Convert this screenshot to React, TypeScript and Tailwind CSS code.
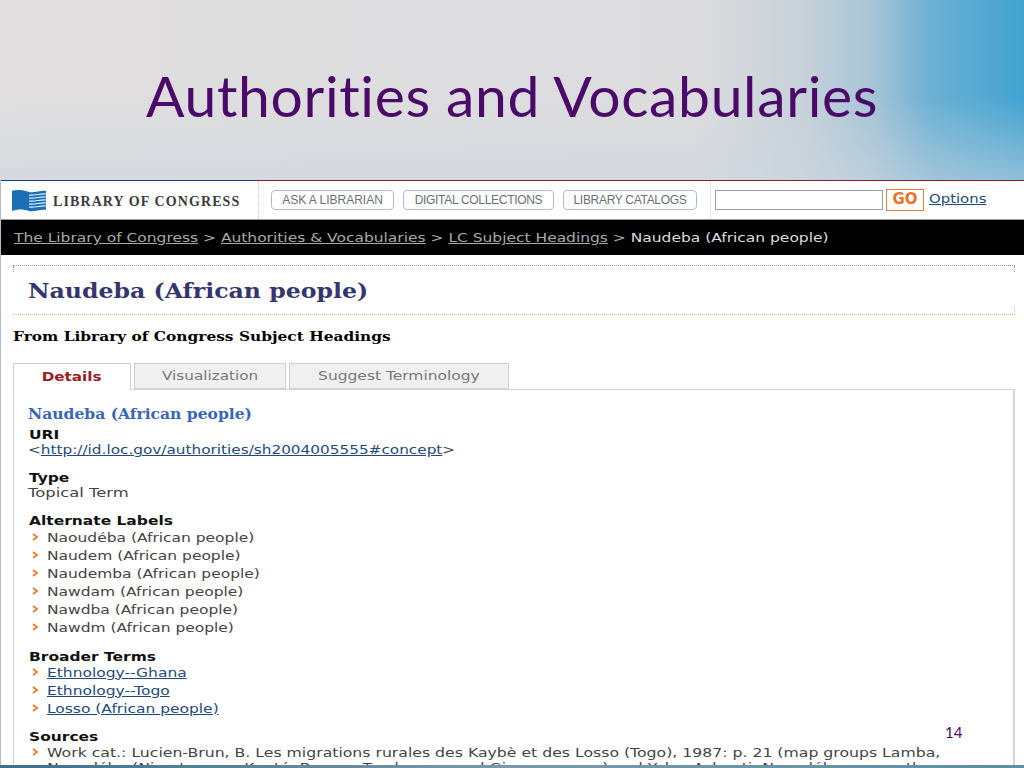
import React from "react";

// the captured page in the slide is stretched sideways
const wide = "inline-block origin-left scale-x-[1.19] whitespace-nowrap";

const Arrow = () => (
  <svg width="8" height="8" viewBox="0 0 8 8" className="shrink-0">
    <path d="M2 1 L6 4 L2 7" fill="none" stroke="#e8803a" strokeWidth="2" />
  </svg>
);

const Item = ({ text, link }: { text: string; link?: boolean }) => (
  <li className="flex items-center h-[18px]">
    <span className="ml-[3px] mr-[8px] flex">
      <Arrow />
    </span>
    <span className={link ? `${wide} text-[#1f4a7a] underline` : `${wide} text-[#444]`}>{text}</span>
  </li>
);

const Label = ({ children }: { children: React.ReactNode }) => (
  <div className="font-bold text-[#111] text-[13px] h-[15px] leading-[15px] pl-px">
    <span className={wide}>{children}</span>
  </div>
);

const NavButton = ({ label, w, tight }: { label: string; w: string; tight?: boolean }) => (
  <div className={`${w} ${tight ? "tracking-[-0.3px]" : ""} h-[20px] flex items-center justify-center border border-[#b4bcc8] rounded-[4px] text-[#6a7078] text-[12px] font-['Liberation_Sans',sans-serif] bg-white`}>
    {label}
  </div>
);

export default function App() {
  return (
    <div className="relative w-[1024px] h-[768px] overflow-hidden bg-white font-['DejaVu_Sans',sans-serif]">
      {/* SLIDE TITLE */}
      <div className="h-[180px] flex bg-[linear-gradient(to_bottom,transparent_55%,rgba(205,215,225,0.55)_100%),linear-gradient(90deg,#e0dedf_0%,#dcdcde_68%,#c8d2da_78%,#a8c5d6_85%,#6cb0d3_91%,#42a3d1_100%)]">
        <h1 className="ml-[146px] mt-[59px] text-[#4b0a69] text-[57px] tracking-[0.66px] leading-[72px] font-['Lato',sans-serif] whitespace-nowrap">
          Authorities and Vocabularies
        </h1>
      </div>

      <div className="border-l border-[#b0bcc8]">
        {/* TOP BAR */}
        <div className="h-[40px] flex items-center bg-white border-b border-b-[#999]">
          <div className="w-[258px] h-full border-t border-t-[#1f3a7a]">
            <div className="h-full flex items-center pt-[2px] border-r border-dotted border-[#ccc]">
              <svg width="35" height="22" viewBox="0 0 35 22" className="ml-[11px]">
                <path d="M0 1 C6 -1 11 0 17 2 C23 3 29 0 34 1 L34 20 C29 19 23 22 17 21 C11 19 6 19 0 21 Z" fill="#1a6fb5" />
                <path d="M17 5 C23 6 29 3 34 4 M17 8 C23 9 29 6 34 7 M17 11 C23 12 29 9 34 10 M17 14 C23 15 29 12 34 13 M17 17 C23 18 29 15 34 16" fill="none" stroke="#e4eff8" strokeWidth="1.1" />
              </svg>
              <span className="ml-[6px] text-[#3b3b3b] text-[14px] font-bold font-['Liberation_Serif',serif] tracking-[1.1px] whitespace-nowrap">
                LIBRARY OF CONGRESS
              </span>
            </div>
          </div>
          <div className="flex-1 h-full flex items-center border-t border-t-[#8c1c24] pb-px">
            <div className="flex gap-[9px] ml-[12px] pr-[13px] h-full items-center border-r border-dotted border-[#ccc]">
              <NavButton label="ASK A LIBRARIAN" w="w-[123px]" />
              <NavButton label="DIGITAL COLLECTIONS" w="w-[151px]" tight />
              <NavButton label="LIBRARY CATALOGS" w="w-[134px]" tight />
            </div>
            <div className="w-[168px] h-[20px] ml-[4px] border border-[#9aa0a6]" />
            <div className="ml-[3px] w-[38px] h-[22px] border border-[#e8803a] text-[#e8762a] font-bold text-[15px] flex items-center justify-center">
              GO
            </div>
            <span className={`${wide} ml-[5px] text-[#1f4a7a] text-[12.5px] underline`}>Options</span>
          </div>
        </div>

        {/* BREADCRUMB */}
        <div className="h-[35px] bg-black flex items-center pl-[13px] pt-px text-[13px] text-[#aaa]">
          <div className={wide}>
            <span className="underline">The Library of Congress</span>
            <span> &gt; </span>
            <span className="underline">Authorities &amp; Vocabularies</span>
            <span> &gt; </span>
            <span className="underline">LC Subject Headings</span>
            <span> &gt; </span>
            <span className="text-[#ddd]">Naudeba (African people)</span>
          </div>
        </div>

        {/* PAGE HEADING */}
        <div className="relative ml-[12px] mr-[9px] mt-[10px] h-[50px] border-t border-dotted border-t-[#999] border-b border-b-[#e8c070] flex items-center pl-[15px] pt-[2px]">
          <div className="absolute left-0 top-0 h-[6px] border-l border-dotted border-[#999]" />
          <div className="absolute right-0 top-0 h-[6px] border-l border-dotted border-[#999]" />
          <div className="absolute right-0 bottom-0 h-[7px] border-l border-dotted border-[#ccc]" />
          <span className="inline-block origin-left scale-x-[1.18] whitespace-nowrap font-['DejaVu_Serif',serif] font-bold text-[#35356f] text-[20px]">Naudeba (African people)</span>
        </div>
        <div className="ml-[12px] mt-[11px] h-[20px] font-['DejaVu_Serif',serif] font-bold text-[13.5px] text-black">
          <span className="inline-block origin-left scale-x-[1.14] whitespace-nowrap">From Library of Congress Subject Headings</span>
        </div>

        {/* TABS */}
        <div className="ml-[12px] mr-[9px] mt-[16px] h-[27px] flex items-end gap-[3px] text-[13px]">
          <div className="w-[118px] h-[27px] -mb-px z-10 bg-white border border-b-0 border-[#d0d0d0] flex items-center justify-center text-[#9a1c24] font-bold">
            <span className="inline-block scale-x-[1.17]">Details</span>
          </div>
          <div className="w-[152px] h-[26px] bg-[#f0f0f0] border border-[#d0d0d0] flex items-center justify-center text-[#777]">
            <span className="inline-block scale-x-[1.17]">Visualization</span>
          </div>
          <div className="w-[220px] h-[26px] bg-[#f0f0f0] border border-[#d0d0d0] flex items-center justify-center text-[#777]">
            <span className="inline-block scale-x-[1.19] whitespace-nowrap">Suggest Terminology</span>
          </div>
        </div>

        {/* DETAILS PANEL */}
        <div className="ml-[12px] mr-[9px] border border-r-2 border-[#d4d4d4] pl-[14px] h-[420px] text-[13px] leading-[15px]">
          <div className="mt-[17px] font-['DejaVu_Serif',serif] font-bold text-[#3a66b8] text-[14px] h-[18px]">
            <span className="inline-block origin-left scale-x-[1.11] whitespace-nowrap">Naudeba (African people)</span>
          </div>
          <div className="mt-[2px]"><Label>URI</Label></div>
          <div className="text-[#444]">
            <span className="inline-block origin-left scale-x-[1.175] whitespace-nowrap">
              &lt;<span className="text-[#1f4a7a] underline">http://id.loc.gov/authorities/sh2004005555#concept</span>&gt;
            </span>
          </div>
          <div className="mt-[13px]"><Label>Type</Label></div>
          <div className="text-[#444]">
            <span className="inline-block origin-left scale-x-[1.26] whitespace-nowrap">Topical Term</span>
          </div>
          <div className="mt-[13px]"><Label>Alternate Labels</Label></div>
          <ul>
            <Item text="Naoudéba (African people)" />
            <Item text="Naudem (African people)" />
            <Item text="Naudemba (African people)" />
            <Item text="Nawdam (African people)" />
            <Item text="Nawdba (African people)" />
            <Item text="Nawdm (African people)" />
          </ul>
          <div className="mt-[13px]"><Label>Broader Terms</Label></div>
          <ul className="-mt-px">
            <Item text="Ethnology--Ghana" link />
            <Item text="Ethnology--Togo" link />
            <Item text="Losso (African people)" link />
          </ul>
          <div className="mt-[12px]"><Label>Sources</Label></div>
          <ul>
            <li className="flex items-center h-[16px]">
              <span className="ml-[3px] mr-[8px] flex"><Arrow /></span>
              <span className="inline-block origin-left scale-x-[1.207] whitespace-nowrap text-[#444]">Work cat.: Lucien-Brun, B. Les migrations rurales des Kaybè et des Losso (Togo), 1987: p. 21 (map groups Lamba,</span>
            </li>
            <li className="pl-[19px] h-[16px] text-[#444]">
              <span className="inline-block origin-left scale-x-[1.207] whitespace-nowrap">Naoudéba (Niamtougou, Kanté, Bassar, Tamberma, and Gisaga groups) and Yaka, Ashanti, Naoudéba groups th</span>
            </li>
          </ul>
        </div>
      </div>

      {/* SLIDE OVERLAYS */}
      <div className="absolute left-[945px] top-[721px] text-[#4b0a69] text-[15px] font-['Lato',sans-serif]">14</div>
      <div className="absolute left-0 right-0 bottom-0 h-[3px] bg-[linear-gradient(90deg,#3f6f8c,#7a9aac_50%,#5f8ca6)]" />
    </div>
  );
}
